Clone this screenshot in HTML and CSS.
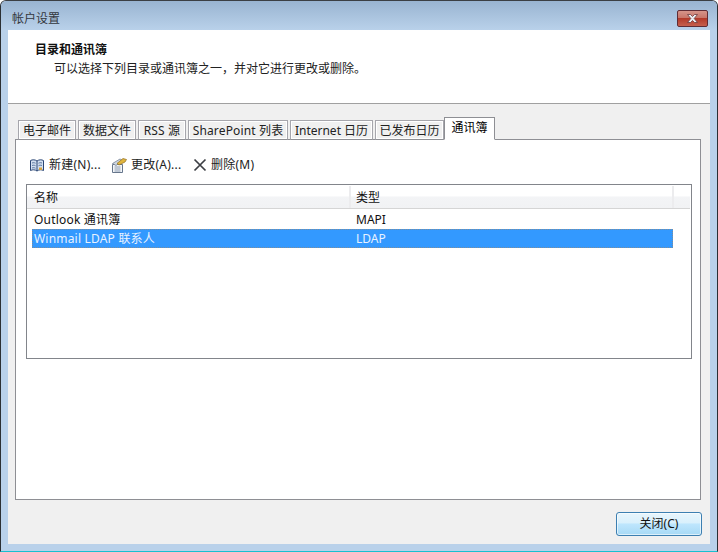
FILE: index.html
```html
<!DOCTYPE html>
<html lang="zh-CN">
<head>
<meta charset="utf-8">
<title>帐户设置</title>
<link rel="stylesheet" href="styles.css">
</head>
<body>
<div class="window">
  <div class="titlebar">
    <span class="title">帐户设置</span>
    <div class="closex">
      <svg width="17" height="11" viewBox="0 0 17 11"><path d="M3.500 1.500h3l2 2 2-2h3l-3.300 4 3.300 4h-3l-2-2-2 2h-3l3.300-4z" fill="#eceef2" stroke="#6b3a3e" stroke-width=".8"/></svg>
    </div>
  </div>
  <div class="client">
    <header class="head">
      <h1>目录和通讯簿</h1>
      <p>可以选择下列目录或通讯簿之一，并对它进行更改或删除。</p>
    </header>
    <main class="body">
      <nav class="tabs">
        <span class="tab t1">电子邮件</span>
        <span class="tab t2">数据文件</span>
        <span class="tab t3">RSS 源</span>
        <span class="tab t4">SharePoint 列表</span>
        <span class="tab t5">Internet 日历</span>
        <span class="tab t6">已发布日历</span>
        <span class="tab active">通讯簿</span>
      </nav>
      <section class="panel">
        <div class="toolbar">
          <span class="tool t-new">
            <svg width="16" height="15" viewBox="0 0 16 15"><path d="M1.500 2.500C3.500 1.500 6 1.500 8 3c2-1.500 4.500-1.500 6.500-.5v10c-2-1-4.500-1-6.500.5-2-1.500-4.500-1.500-6.500-.5z" fill="#d3e0f1" stroke="#2b4674"/><path d="M8 3v10" stroke="#2b4674"/><path d="M3 5c1.300-.5 2.500-.3 3.500.2M3 7.500c1.300-.5 2.500-.3 3.500.200M3 10c1.300-.5 2.500-.3 3.500.2" stroke="#5a769f" fill="none"/><path d="M9.500 5.200c1-.5 2.200-.7 3.500-.2M9.500 7.700c1-.5 2.200-.7 3.500-.2" stroke="#5a769f" fill="none"/><path d="M10 9.500h3v2.500h-3z" fill="#d8a23c"/></svg>
            <span>新建(N)...</span>
          </span>
          <span class="tool t-edit">
            <svg width="16" height="16" viewBox="0 0 16 16"><path d="M1.500 7.500h10v8h-10z" fill="#f4f6f9" stroke="#66768c"/><path d="M3.500 10h6M3.500 12h6M3.500 14h6" stroke="#8a9ab0"/><path d="M1.500 6.500 9 2l3 1.500-7 5z" fill="#cfd8e2" stroke="#66768c" stroke-width=".7"/><path d="m6 6.500 6-5 3.500 1-1.500 2.500-6 3z" fill="#e0b53f" stroke="#8f6b1c" stroke-width=".7"/></svg>
            <span>更改(A)...</span>
          </span>
          <span class="tool t-del">
            <svg width="14" height="14" viewBox="0 0 14 14"><path d="m1.500 1.500 11 11M12.500 1.500l-11 11" stroke="#3c3f44" stroke-width="1.700"/></svg>
            <span>删除(M)</span>
          </span>
        </div>
        <div class="list">
          <div class="lhead">
            <div class="hcol c-name">名称</div>
            <div class="hcol c-type">类型</div>
            <div class="hcol c-rest"></div>
          </div>
          <div class="row"><span class="c-name">Outlook 通讯簿</span><span class="c-type">MAPI</span></div>
          <div class="row sel"><span class="c-name">Winmail LDAP 联系人</span><span class="c-type">LDAP</span></div>
        </div>
      </section>
      <footer class="foot">
        <button class="btn" type="button">关闭(C)</button>
      </footer>
    </main>
  </div>
</div>
</body>
</html>
```
FILE: styles.css
```css
* { box-sizing: border-box; }
html, body {
  margin: 0;
  width: 718px;
  height: 552px;
  overflow: hidden;
  background: #fff;
  font-family: "Noto Sans", "Noto Sans CJK SC", sans-serif;
  font-size: 12px;
  color: #111;
}
.window {
  width: 718px;
  height: 552px;
  background: #b9d1ea;
  border: 1px solid #2b2f33;
  border-bottom: 1px solid #19c0d0;
  border-top-color: #3b3f44;
  border-radius: 6px 6px 0 0;
  padding: 0 7px 7px;
  display: flex;
  flex-direction: column;
}
.titlebar {
  flex: 0 0 29px;
  margin: 0 -7px;
  padding: 0 9px 0 11px;
  border-radius: 5px 5px 0 0;
  background: linear-gradient(#99b4d1, #b9d1ea);
  display: flex;
  align-items: flex-start;
  justify-content: space-between;
}
.title {
  margin-top: 9px;
  line-height: 17px;
  color: #33373d;
}
.closex {
  margin-top: 9px;
  width: 31px;
  height: 17px;
  border: 1px solid #5f2c35;
  border-radius: 2px;
  background: linear-gradient(#d6948a 0, #c8766a 45%, #b33a2a 50%, #c5604e 100%);
  display: flex;
  align-items: center;
  justify-content: center;
}
.client {
  flex: 1;
  display: flex;
  flex-direction: column;
  min-height: 0;
}
.head {
  flex: 0 0 74px;
  background: #fff;
  border-bottom: 1px solid #a0a0a0;
  padding: 11px 0 0 27px;
}
.head h1 {
  margin: 0;
  font-size: 12px;
  font-weight: 700;
  line-height: 18px;
  color: #111;
}
.head p {
  margin: 1px 0 0 19px;
  line-height: 18px;
  color: #222;
}
.body {
  flex: 1;
  background: #f0f0f0;
  padding: 13px 9px 9px 7px;
  display: flex;
  flex-direction: column;
  min-height: 0;
}
.tabs {
  flex: 0 0 23px;
  display: flex;
  align-items: flex-end;
  padding-left: 3px;
  margin-bottom: -1px;
  position: relative;
  z-index: 1;
}
.tab {
  height: 20px;
  margin-right: 2px;
  border: 1px solid #a6a6ac;
  border-bottom: 1px solid #8e8f94;
  background: #f0f0f0;
  box-shadow: inset 0 0 0 1px #fff;
  line-height: 19px;
  text-align: center;
  white-space: nowrap;
  color: #222;
}
.t1 { width: 58px; }
.t2 { width: 58px; }
.t3 { width: 48px; letter-spacing: .15px; }
.t4 { width: 100px; letter-spacing: .15px; }
.t5 { width: 83px; }
.t6 { width: 69px; margin-right: 0; }
.tab.active {
  width: 51px;
  height: 23px;
  margin-right: 0;
  background: #fff;
  box-shadow: none;
  border-color: #8e8f94;
  border-bottom-color: #fff;
  line-height: 20px;
  color: #000;
}
.panel {
  flex: 0 0 361px;
  background: #fff;
  border: 1px solid #8e8f94;
  padding: 0 8px 0 10px;
  display: flex;
  flex-direction: column;
}
.toolbar {
  flex: 0 0 44px;
  display: flex;
  align-items: center;
  padding: 6px 0 0 3px;
  color: #222;
  letter-spacing: .25px;
}
.tool {
  display: flex;
  align-items: center;
  gap: 4px;
  line-height: 16px;
  white-space: nowrap;
}
.t-new { width: 82px; }
.t-edit { width: 82px; }
.list {
  flex: 0 0 175px;
  border: 1px solid #82858b;
  padding: 1px 0 0 0;
}
.lhead {
  height: 23px;
  display: flex;
  border-bottom: 1px solid #d5d5d5;
  background: linear-gradient(#fff 0, #fff 45%, #f3f4f6 50%, #f1f2f4 100%);
  margin-right: 1px;
}
.hcol {
  line-height: 23px;
  border-right: 2px solid #ececee;
}
.hcol.c-name { width: 324px; padding-left: 7px; }
.hcol.c-type { width: 323px; padding-left: 5px; }
.hcol.c-rest { flex: 1; border-right: 0; }
.row {
  height: 19px;
  margin: 1px 18px 0 5px;
  display: flex;
  line-height: 19px;
  color: #111;
}
.row + .row { margin-top: 0; }
.row .c-name { width: 324px; padding-left: 2px; letter-spacing: .2px; }
.row .c-type { padding-left: 0; }
.sel {
  background: #3399ff;
  outline: 1px dotted rgba(190, 130, 70, .55);
  outline-offset: -1px;
  color: #e8f2ff;
}
.foot {
  flex: 1;
  display: flex;
  justify-content: flex-end;
  align-items: flex-start;
  padding: 12px 0 0;
  margin-right: -1px;
}
.btn {
  width: 86px;
  height: 24px;
  padding: 0;
  border: 1px solid #3c7fb1;
  border-radius: 3px;
  background: linear-gradient(#e8f5fc 0, #d9f0fc 45%, #bee6fd 50%, #a7d9f5 100%);
  box-shadow: inset 0 0 0 1px rgba(255,255,255,.6);
  font-family: inherit;
  font-size: 12px;
  color: #111;
  line-height: 20px;
}
```
